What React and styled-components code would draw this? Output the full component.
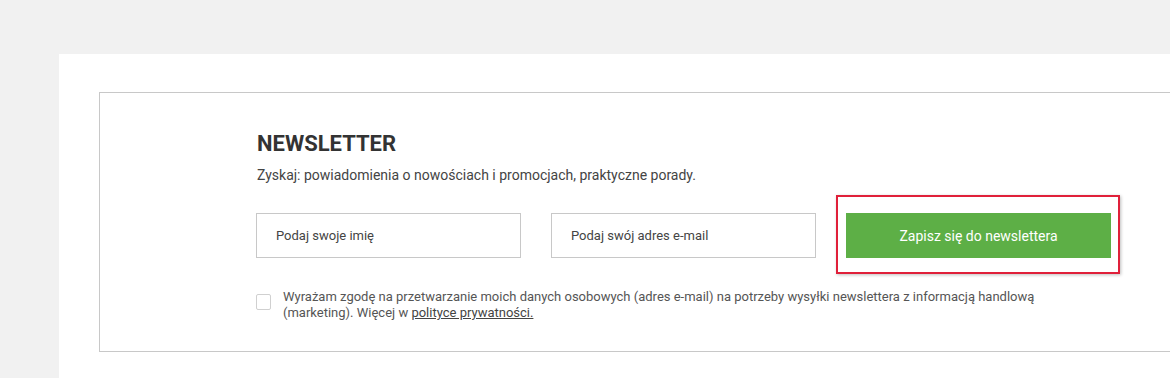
import React from 'react'
import styled, { createGlobalStyle } from 'styled-components'

const GlobalStyle = createGlobalStyle`
  html, body {
    margin: 0;
    padding: 0;
    background: #f1f1f1;
    overflow: hidden;
  }
  body {
    font-family: Roboto, "Liberation Sans", Arial, sans-serif;
    color: #333;
  }
`

const Page = styled.div`
  padding: 54px 0 0 59px;
  height: 378px;
  box-sizing: border-box;
  overflow: hidden;
`

const Panel = styled.section`
  background: #fff;
  width: 1111px;
  height: 324px;
  padding: 38px 0 0 40px;
  box-sizing: border-box;
  overflow: hidden;
`

const Box = styled.div`
  width: 1150px;
  height: 260px;
  border: 1px solid #c8c8c8;
  box-sizing: border-box;
  padding: 36px 0 0 156px;
`

const Title = styled.h2`
  margin: 0;
  padding-left: 1px;
  font-size: 22px;
  line-height: 30px;
  font-weight: 700;
  color: #333;
`

const Lead = styled.p`
  margin: 7px 0 0 1px;
  font-size: 14px;
  line-height: 18px;
  color: #444;
`

const Form = styled.form`
  display: grid;
  grid-template-columns: repeat(3, 265px);
  column-gap: 30px;
  margin-top: 29px;
`

const Input = styled.input`
  height: 45px;
  box-sizing: border-box;
  border: 1px solid #c8c8c8;
  padding: 0 19px;
  font-family: inherit;
  font-size: 13px;
  color: #333;
  outline: none;
  &::placeholder {
    color: #444;
  }
`

const Highlight = styled.div`
  position: relative;
  &::before {
    content: '';
    position: absolute;
    left: -10px;
    right: -9px;
    top: -18px;
    bottom: -16px;
    border: 2px solid #e0203a;
    box-shadow: 1px 1px 3px rgba(0, 0, 0, 0.25);
    pointer-events: none;
  }
`

const Button = styled.button`
  width: 100%;
  height: 45px;
  border: 0;
  background: #5daf46;
  color: #fff;
  font-family: inherit;
  font-size: 14px;
  font-weight: 400;
  cursor: pointer;
`

const Consent = styled.label`
  display: flex;
  align-items: flex-start;
  gap: 12px;
  margin-top: 31px;
  width: 790px;
  font-size: 13px;
  line-height: 16px;
  color: #555;
`

const Check = styled.span`
  flex: none;
  width: 13px;
  height: 14px;
  margin-top: 5px;
  border: 1px solid #d0d0d0;
  border-radius: 2px;
  background: #fff;
`

const Link = styled.a`
  color: #444;
  text-decoration: underline;
`

const App = () => {
  return (
    <>
      <GlobalStyle />
      <Page>
        <Panel>
          <Box>
            <Title>NEWSLETTER</Title>
            <Lead>Zyskaj: powiadomienia o nowościach i promocjach, praktyczne porady.</Lead>
            <Form onSubmit={(e) => e.preventDefault()}>
              <Input type="text" placeholder="Podaj swoje imię" />
              <Input type="email" placeholder="Podaj swój adres e-mail" />
              <Highlight>
                <Button type="submit">Zapisz się do newslettera</Button>
              </Highlight>
            </Form>
            <Consent>
              <Check />
              <span>
                Wyrażam zgodę na przetwarzanie moich danych osobowych (adres e-mail) na potrzeby wysyłki
                newslettera z informacją handlową (marketing). Więcej w <Link href="#">polityce prywatności.</Link>
              </span>
            </Consent>
          </Box>
        </Panel>
      </Page>
    </>
  )
}

export default App
